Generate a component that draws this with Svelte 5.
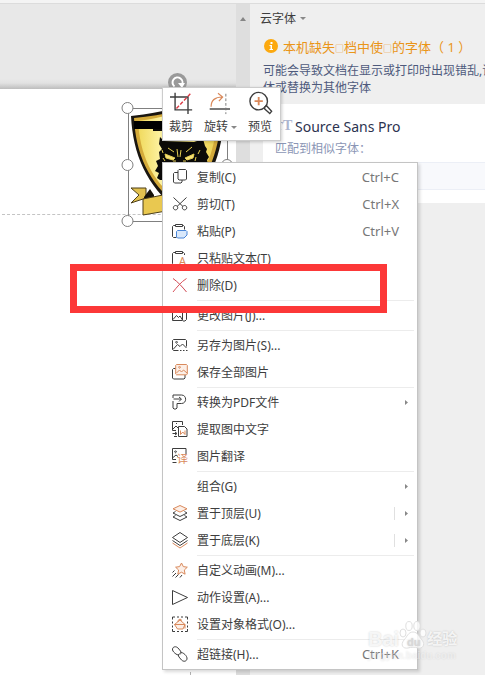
<script>
  const dark = '#3d3d3d';
  const orange = '#d9895b';
  const blue = '#4a86d8';

  // each icon is a list of [path, stroke, fill]
  const icons = {
    copy: [
      ['M8 .5h6.5l1 1v8.5l-1 1H8l-1-1V1.5z', dark],
      ['M7 3.5H3.5l-1 1v8.500l1 1H10l1-1V11', dark],
    ],
    cut: [
      ['M2.5 1.5l9.5 9M15.5 1.5l-9.5 9', dark],
      ['M4.5 9.500a2.200 2.200 0 1 0 .1 0zM13.5 9.500a2.200 2.200 0 1 0 .1 0z', dark],
    ],
    paste: [
      ['M5 2.5H2.5l-1 1v10l1 1H5.500M11 2.5h1.500l1 1V6.500', dark],
      ['M4.500 1.5h7v2h-7z', dark],
      ['M6.500 7.500h8.500l1 1v3.500l-3 3H6.500l-1-1V8.500z', blue, '#d9e8fb'],
    ],
    pasteText: [
      ['M5 2.5H2.5l-1 1v10l1 1H5.500M11 2.5h1.500l1 1V5', dark],
      ['M4.500 1.5h7v2h-7z', dark],
    ],
    remove: [
      ['M2 1.5c5 3.500 9 8 13.500 13.500', '#cf4650'],
      ['M15.500 1.5C10 5 6 10 2 15', '#d9505a'],
    ],
    change: [
      ['M1.5 2.5h10v11h-10z', dark],
      ['M2 12.500l3.500-4 2 2 1.500-1.500 2.500 4M4.500 5.500h1.500', dark],
      ['M12 3.5h3.500v9l-1.500 1.500h-2', dark],
    ],
    saveAs: [
      ['M7.500 13.500H2.500l-1-1v-9l1-1h12l1 1V9.500', dark],
      ['M2 12.500l4.500-5 2.500 2 2.500-2.500 4 4', dark],
      ['M5.500 4.500a.8.8 0 1 0 .1 0z', dark],
      ['M9 13.500h1.500M12 13.500h1.500M15 13.500h1.500', dark],
    ],
    saveAll: [
      ['M5 4.500H2.500l-1 1v8.500l1 1h10.500l1-1v-3', dark],
      ['M5.500.5H15.500l.8.8V10l-.8.8H5.500l-.8-.8V1.300z', orange, '#fcefe7'],
      ['M5.500 9l3-3 2 2 2-2L16 9', orange],
      ['M8.500 2.500a.8.8 0 1 0 .1 0z', orange],
    ],
    pdf: [
      ['M2 4V1h8.500c5.500 0 5.500 8.500 0 8.500H6V14l-1 1H3l-1-1V7', dark],
      ['M2.500 5h7.500M8 3L10.500 5 8 7.500', dark],
    ],
    extract: [
      ['M5 9.500H1.5V.5h10V4', dark],
      ['M2 8l3-3 2 2M5 2.500h1', dark],
      ['M7.500 5.500h6l2.500 2.500v7.500H7.500z', dark, '#fff'],
      ['M9.500 9.500v4l2.300-2.500 2.200 2.500v-4', orange],
      ['M1.500 12.500h4M4 11l2 1.500L4 14M3 15.500h3', dark],
    ],
    translate: [
      ['M5 11.500H1.5V.5h13.500V6', dark],
      ['M2 9.500l3-2.500 2 1.500', dark],
      ['M4.500 3a.8.8 0 1 0 .1 0zM1.500 14.500h4', dark],
    ],
    toTop: [
      ['M2 8l7 3.500L16 8M2 12l7 3.500 7-3.500', dark],
      ['M2 8l2.500-1.500M16 8l-2.500-1.500M2 12l2.500-1.500M16 12l-2.500-1.500', dark],
      ['M9 .5l7 3.300-7 3.300-7-3.300z', orange, '#fcefe7'],
    ],
    toBottom: [
      ['M1.5 11l7.500 5 7.500-5', orange],
      ['M1.5 8.500l7.500 5 7.500-5', dark],
      ['M9 .5l7.500 5-7.500 5-7.500-5z', dark],
    ],
    animation: [
      ['M10.500 1l1.800 3.600 4 .6-3 2.800.8 4.200-3.600-2-3.700 2 .8-4.200-3-2.800 4-.6z', orange, '#fcefe7'],
      ['M1.5 10.500l2-2M1.5 14.500l3.500-3.500M4.500 15.500l3-3M9 15.500l2-2.500', dark],
    ],
    action: [['M1.5 1.5l15 7-15 7z', dark]],
    format: [
      ['M1.5 3.500V1h2.500M6 1h2M10 1h2M14 1h2.500v2.500M16.500 5.500v2M16.500 9.500v2M16.500 13v2.500H14M12 15.500h-2M8 15.500H6M4 15.500H1.500V13M1.500 11.500v-2M1.500 7.500v-2', dark],
      ['M3.500 8.500L9 4l5 4.500-2 4.500H6.500zM3.500 8.500h10.500v4M7 6V4.500l2-1.500 2 1.500', orange, '#fcefe7'],
    ],
    link: [
      ['M8 9C6 9.500 1 5.500 1.500 3 2 .5 5 0 7 2l2.500 3c1 1.500.5 2.500-.5 3.500', dark],
      ['M9.500 6.500c2.500-.5 7 3.500 6.500 6.500-.5 2.500-3.500 3-5.500 1L8 11C7 9.500 7.500 8.500 8.500 7.500', dark],
    ],
  };

  const groups = [
    [
      { label: '复制(C)', icon: 'copy', keys: 'Ctrl+C' },
      { label: '剪切(T)', icon: 'cut', keys: 'Ctrl+X' },
      { label: '粘贴(P)', icon: 'paste', keys: 'Ctrl+V' },
      { label: '只粘贴文本(T)', icon: 'pasteText', glyph: 'A' },
      { label: '删除(D)', icon: 'remove' },
    ],
    [{ label: '更改图片(J)...', icon: 'change' }],
    [
      { label: '另存为图片(S)...', icon: 'saveAs' },
      { label: '保存全部图片', icon: 'saveAll' },
    ],
    [
      { label: '转换为PDF文件', icon: 'pdf', sub: true },
      { label: '提取图中文字', icon: 'extract' },
      { label: '图片翻译', icon: 'translate', glyph: '译' },
    ],
    [
      { label: '组合(G)', sub: true },
      { label: '置于顶层(U)', icon: 'toTop', sub: true, split: true },
      { label: '置于底层(K)', icon: 'toBottom', sub: true, split: true },
    ],
    [
      { label: '自定义动画(M)...', icon: 'animation' },
      { label: '动作设置(A)...', icon: 'action' },
      { label: '设置对象格式(O)...', icon: 'format' },
    ],
    [{ label: '超链接(H)...', icon: 'link', keys: 'Ctrl+K' }],
  ];
</script>

<div class="app">
  <div class="ribbon"></div>
  <div class="workspace">
    <main>
      <div class="pasteboard"></div>
      <div class="slide">
        <div class="title-box"></div>
        <div class="body-box"></div>
      </div>
    </main>
    <div class="scrollbar">
      <svg width="6" height="4" viewBox="0 0 6 4"><path d="M0 4l3-4 3 4z" fill="#858585" /></svg>
    </div>
    <aside>
      <button class="panel-title">云字体 <i class="caret"></i></button>
      <div class="warning">
        <svg width="14" height="14" viewBox="0 0 14 14">
          <circle cx="7" cy="7" r="7" fill="#fca90f" />
          <path d="M6.500 3h2v2h-2zM5.500 6h2.500v4h1v1H5.500v-1h1V7h-1z" fill="#fff" />
        </svg>
        <span>本机缺失<small>□</small>档中使<small>□</small>的字体（ 1 ）</span>
      </div>
      <p class="hint">可能会导致文档在显示或打印时出现错乱,请<br />体或替换为其他字体</p>
      <section class="card">
        <h3><span class="tt">T<b>T</b></span>Source Sans Pro</h3>
        <label for="similar">匹配到相似字体：</label>
        <input id="similar" type="text" />
      </section>
    </aside>
  </div>

  <!-- selected picture -->
  <svg class="picture" width="115" height="160" viewBox="120 70 115 160">
    <defs>
      <linearGradient id="gold" x1="0" x2="1">
        <stop offset="0" stop-color="#f0d95c" />
        <stop offset="0.3" stop-color="#fdf3a4" />
        <stop offset="0.7" stop-color="#f8e67c" />
        <stop offset="1" stop-color="#ecd050" />
      </linearGradient>
    </defs>
    <path d="M131 116q25-3 46-8 21 5 47 8c-2 38-12 68-46 95-32-26-45-57-47-95z" fill="#1a1610" />
    <path d="M134 118q23-2 43-7 20 5 44 7c-3 36-12 63-43 88-30-24-42-52-44-88z" fill="#d4aa3a" />
    <path d="M138 121q21-3 39-8 19 5 40 8c-3 33-12 57-39 80-27-21-38-47-40-80z" fill="url(#gold)" />
    <path
      d="M160 137l4 4 30 1 9-3 2 7 2 3-1 3 3 5-2 3 1 4-2 16h-46l-3-2 2-5-4-2 3-5-2-5 4-2-1-7 3-3-3-5z"
      fill="#0b0a08"
    />
    <path
      d="M165 154l10 4-2 2-7-2zM185 158l9-4-1 4-6 2zM177 149l1 8M181 150l-1 7M168 148l6 4M192 147l-6 5M163 158l2 3M196 157l-1 4M173 161h3M183 161h3M162 150l1 3M200 150l-2 4"
      fill="#f6e27a"
      stroke="#e7cf52"
    />
    <path d="M131 188h15v10l-15 5 8-8z" fill="#e2c14f" stroke="#4c3f19" />
    <path d="M144 197l6-8 4 6v2l-10 2z" fill="#16120b" />
    <path d="M143 199l35-7v17l-35 6z" fill="#e9c850" stroke="#4c3f19" />
    <path d="M153 130h11" stroke="#0b0a08" stroke-width="2" />
    <path d="M134 121h30v8h-30z" fill="#000" />
    <path d="M128.500 108.500h99v113h-99z" fill="none" stroke="#808080" />
    {#each [108, 165, 221] as cy}
      <circle cx="127.500" {cy} r="5.500" fill="#fff" stroke="#808080" />
      <circle cx="227" {cy} r="5.500" fill="#fff" stroke="#808080" />
    {/each}
    <circle cx="177.500" cy="82.500" r="9.500" fill="#999" />
    <path d="M174.500 86.500a5 5 0 1 1 7-1" fill="none" stroke="#fff" stroke-width="2" />
    <path d="M178 83h7l-3 5z" fill="#fff" />
  </svg>

  <div class="mini-bar">
    <button>
      <svg width="26" height="26" viewBox="0 0 26 26">
        <path d="M0 6.500h19.500V25M5.500 2v18.500H24" fill="none" stroke="#3d3d3d" stroke-width="1.500" />
        <path d="M7 19L22 3" stroke="#dc3a45" stroke-width="1.500" stroke-dasharray="4 2" />
      </svg>
      裁剪
    </button>
    <button>
      <svg width="28" height="26" viewBox="0 0 28 26">
        <path d="M6.500 17C6.500 10 11 6.500 18.500 6.500M14 2.500l5 4-4 4.500" fill="none" stroke="#d9895b" stroke-width="1.300" />
        <path d="M5 19.500h22" stroke="#3d3d3d" stroke-width="1.500" />
        <path d="M22.500 3v22" stroke="#777" stroke-dasharray="3 2" />
      </svg>
      <span>旋转 <i class="caret"></i></span>
    </button>
    <button>
      <svg width="26" height="26" viewBox="0 0 26 26" fill="none">
        <circle cx="10.500" cy="11" r="9.500" stroke="#3d3d3d" stroke-width="1.500" />
        <path d="M10.500 6.500v9M6 11h9" stroke="#d9895b" stroke-width="2" />
        <path d="M17 17.500l2-1.500 5.500 6-2 2.500-5.500-5z" stroke="#3d3d3d" stroke-width="1.500" fill="#fff" />
      </svg>
      预览
    </button>
  </div>

  <div class="menu">
    {#each groups as group, g}
      {#if g > 0}
        <hr />
      {/if}
      {#each group as item}
        <button class="item">
          <svg class="icon" width="18" height="17" viewBox="0 0 18 17">
            {#each icons[item.icon] || [] as [d, stroke, fill]}
              <path {d} {stroke} fill={fill || 'none'} />
            {/each}
            {#if item.glyph}
              <text x={item.glyph === 'A' ? 8 : 6} y="15">{item.glyph}</text>
            {/if}
          </svg>
          <span class="label">{item.label}</span>
          {#if item.keys}
            <kbd>{item.keys}</kbd>
          {/if}
          {#if item.sub}
            <span class="sub" class:split={item.split}>
              <svg width="3" height="5" viewBox="0 0 3 5"><path d="M0 0l3 2.500L0 5z" fill="#888" /></svg>
            </span>
          {/if}
        </button>
      {/each}
    {/each}
  </div>

  <div class="highlight"></div>

  <div class="watermark">
    <div class="brand">
      Bai
      <svg width="28" height="30" viewBox="0 0 28 30">
        <ellipse cx="4" cy="13" rx="3" ry="4" />
        <ellipse cx="10" cy="6" rx="3.200" ry="4.500" />
        <ellipse cx="18" cy="6" rx="3.200" ry="4.500" />
        <ellipse cx="24" cy="13" rx="3" ry="4" />
        <path d="M14 12c5 0 6 5 9 8 4 5 0 9-4 8-3-1-7-1-10 0-5 1-8-3-4-8 3-3 4-8 9-8z" />
        <text x="8" y="26">du</text>
      </svg>
      <span>经验</span>
    </div>
    <div class="site">jingyan.baidu.com</div>
  </div>
</div>

<style>
  :global(body) {
    margin: 0;
    background: #efefef;
  }
  .app {
    position: relative;
    display: flex;
    flex-direction: column;
    min-height: 100vh;
    overflow: hidden;
    font-family: 'Noto Sans', 'Noto Sans CJK SC', sans-serif;
    font-size: 12px;
    color: #3d3d3d;
  }
  button {
    padding: 0;
    border: 0;
    background: none;
    font: inherit;
    color: inherit;
    text-align: left;
    white-space: nowrap;
  }
  .ribbon {
    height: 3px;
    background: #f4f4f4;
    border-bottom: 1px solid #dcdcdc;
  }
  .workspace {
    flex: 1;
    display: grid;
    grid-template-columns: 236px 14px minmax(0, 1fr);
  }

  main {
    display: flex;
    flex-direction: column;
  }
  .pasteboard {
    height: 85px;
    background: linear-gradient(#e8e8e8 75px, #e2e2e2 79px, #bdbdbd);
  }
  .slide {
    flex: 1;
    display: flex;
    flex-direction: column;
    background: #fff;
  }
  .title-box {
    height: 125px;
    margin-left: 2px;
    border-bottom: 1px dashed #c4c4c4;
  }
  .body-box {
    flex: 1;
    width: 190px;
    border-right: 1px dashed #b4b4b4;
  }
  .scrollbar {
    padding-top: 11px;
    background: #dedede;
    text-align: center;
    line-height: 4px;
  }

  aside {
    background: #efefef;
    white-space: nowrap;
    overflow: hidden;
  }
  .panel-title {
    display: flex;
    align-items: center;
    gap: 4px;
    height: 28px;
    margin-left: 10px;
  }
  .caret {
    display: inline-block;
    border: 3px solid transparent;
    border-top-color: #888;
    border-bottom: 0;
    vertical-align: middle;
  }
  .warning {
    display: flex;
    align-items: center;
    gap: 5px;
    height: 28px;
    padding: 0 0 2px 14px;
    font-size: 13px;
    color: #ea9518;
  }
  .warning small {
    font-size: 9px;
  }
  .hint {
    margin: 0 0 8px 13px;
    line-height: 17px;
    color: #4e5a7c;
  }
  .card {
    display: flex;
    flex-direction: column;
    margin-left: 13px;
    padding: 12px 0 13px 12px;
    background: #fff;
  }
  h3 {
    display: flex;
    align-items: center;
    gap: 4px;
    height: 20px;
    margin: 0 0 4px;
    font-size: 14px;
    font-weight: 400;
    color: #2c3350;
  }
  .tt {
    width: 16px;
    font-family: 'Liberation Serif', serif;
    font-size: 12px;
    font-weight: 700;
    color: #adb6cf;
  }
  .tt b {
    font-size: 14px;
  }
  label {
    line-height: 18px;
    color: #8b96b5;
  }
  input {
    box-sizing: border-box;
    height: 28px;
    margin-top: 4px;
    border: 1px solid #eceff6;
    border-right: 0;
    background: #f8f9fc;
  }

  .picture {
    position: absolute;
    left: 120px;
    top: 70px;
  }

  .mini-bar {
    position: absolute;
    left: 162px;
    top: 87px;
    box-sizing: border-box;
    display: flex;
    gap: 9px;
    width: 119px;
    height: 54px;
    padding: 3px 6px;
    border: 1px solid #ccc;
    background: #fff;
    box-shadow: 1px 1px 3px rgba(0, 0, 0, 0.2);
  }
  .mini-bar button {
    display: flex;
    flex-direction: column;
    gap: 2px;
    line-height: 20px;
  }
  .mini-bar button:nth-child(2) {
    width: 36px;
  }

  .menu {
    position: absolute;
    left: 162px;
    top: 162px;
    box-sizing: border-box;
    width: 256px;
    padding: 1px 0;
    border: 1px solid #c4c4c4;
    background: #fff;
    box-shadow: 2px 2px 3px rgba(0, 0, 0, 0.15);
  }
  .item {
    display: flex;
    align-items: center;
    width: 100%;
    height: 27px;
    padding: 0 9px 0 8px;
  }
  .item:hover {
    background: #f0f0f0;
  }
  .icon {
    margin-right: 8px;
  }
  .icon text {
    font-size: 11px;
    fill: #d9895b;
  }
  .label {
    flex: 1;
    padding-bottom: 2px;
  }
  kbd {
    margin-right: 9px;
    padding-bottom: 2px;
    font-family: inherit;
    font-size: 13px;
    color: #777;
  }
  .sub {
    display: flex;
    align-items: center;
    height: 13px;
    padding-left: 10px;
  }
  .split {
    border-left: 1px solid #e0e0e0;
  }
  hr {
    height: 1px;
    margin: 1px 3px 1px 34px;
    border: 0;
    background: #ececec;
  }

  .highlight {
    position: absolute;
    left: 70px;
    top: 264px;
    box-sizing: border-box;
    width: 317px;
    height: 49px;
    border: 7px solid #fc3838;
  }

  .watermark {
    position: absolute;
    left: 368px;
    top: 620px;
    color: rgba(255, 255, 255, 0.8);
    font-family: 'Liberation Sans', 'Noto Sans CJK SC', sans-serif;
    font-weight: 700;
    text-shadow: 0 0 2px rgba(0, 0, 0, 0.2);
    pointer-events: none;
  }
  .brand {
    display: flex;
    align-items: flex-end;
    height: 30px;
    font-size: 20px;
    line-height: 22px;
  }
  .brand span {
    font-size: 15px;
  }
  .brand svg {
    fill: rgba(255, 255, 255, 0.8);
    stroke: #e0e0e0;
  }
  .brand text {
    font-size: 11px;
    fill: #d8d8d8;
    stroke: none;
  }
  .site {
    font-size: 10px;
    line-height: 12px;
    color: rgba(255, 255, 255, 0.4);
    text-shadow: 0 0 2px rgba(0, 0, 0, 0.1);
  }
</style>
